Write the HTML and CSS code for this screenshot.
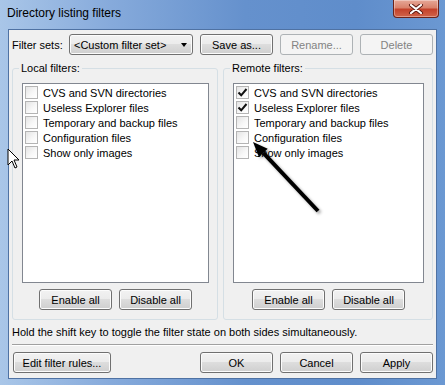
FILE: index.html
```html
<!DOCTYPE html>
<html lang="en">
<head>
    <meta charset="UTF-8">
    <title>Directory listing filters</title>
    <link rel="stylesheet" href="styles.css">
</head>
<body>
    <div class="window">
        <div class="titlebar">
            <span class="title">Directory listing filters</span>
            <div class="close">
                <svg width="16" height="10" viewBox="0 0 16 10">
                    <path d="M3 1 L13 9 M13 1 L3 9" stroke="#5a1a12" stroke-width="4" stroke-linecap="round"/>
                    <path d="M3 1 L13 9 M13 1 L3 9" stroke="#ffffff" stroke-width="2.2" stroke-linecap="round"/>
                </svg>
            </div>
        </div>

        <div class="client">
            <div class="sets-row">
                <span class="sets-label">Filter sets:</span>
                <div class="combo">
                    <span>&lt;Custom filter set&gt;</span>
                    <span class="combo-arrow"></span>
                </div>
                <button class="btn">Save as...</button>
                <button class="btn" disabled>Rename...</button>
                <button class="btn" disabled>Delete</button>
            </div>

            <div class="groups">
                <fieldset class="group group-local">
                    <legend>Local filters:</legend>
                    <div class="filter-list">
                        <div class="filter-item"><span class="check"></span>CVS and SVN directories</div>
                        <div class="filter-item"><span class="check"></span>Useless Explorer files</div>
                        <div class="filter-item"><span class="check"></span>Temporary and backup files</div>
                        <div class="filter-item"><span class="check"></span>Configuration files</div>
                        <div class="filter-item"><span class="check"></span>Show only images</div>
                    </div>
                    <div class="group-buttons">
                        <button class="btn">Enable all</button>
                        <button class="btn">Disable all</button>
                    </div>
                </fieldset>

                <fieldset class="group group-remote">
                    <legend>Remote filters:</legend>
                    <div class="filter-list">
                        <div class="filter-item"><span class="check checked"><svg width="11" height="11" viewBox="0 0 11 11"><path d="M1.5 5.5 L4.2 8.3 L9.5 2" fill="none" stroke="#111" stroke-width="2"/></svg></span>CVS and SVN directories</div>
                        <div class="filter-item"><span class="check checked"><svg width="11" height="11" viewBox="0 0 11 11"><path d="M1.5 5.5 L4.2 8.3 L9.5 2" fill="none" stroke="#111" stroke-width="2"/></svg></span>Useless Explorer files</div>
                        <div class="filter-item"><span class="check"></span>Temporary and backup files</div>
                        <div class="filter-item"><span class="check"></span>Configuration files</div>
                        <div class="filter-item"><span class="check"></span>Show only images</div>
                    </div>
                    <div class="group-buttons">
                        <button class="btn">Enable all</button>
                        <button class="btn">Disable all</button>
                    </div>
                </fieldset>
            </div>

            <p class="hint">Hold the shift key to toggle the filter state on both sides simultaneously.</p>
            <div class="separator"></div>

            <div class="footer">
                <button class="btn btn-edit">Edit filter rules...</button>
                <div class="spacer"></div>
                <button class="btn">OK</button>
                <button class="btn">Cancel</button>
                <button class="btn">Apply</button>
            </div>
        </div>

        <!-- mouse pointer at the left edge -->
        <svg class="pointer" width="14" height="22" viewBox="0 0 14 22">
            <path d="M1 1 L1 17 L5 13 L8 20 L10 19 L7 12 L12 12 Z" fill="#fff" stroke="#000" stroke-width="1" stroke-linejoin="miter"/>
        </svg>

        <!-- annotation arrow -->
        <svg class="annotation" width="90" height="85" viewBox="0 0 90 85">
            <path d="M23.3 17.9 L78 76" stroke="#000" stroke-width="4"/>
            <path d="M13 7 L27.7 13.8 L18.9 22 Z" fill="#000"/>
        </svg>
    </div>
</body>
</html>
```

FILE: styles.css
```css
* {
    margin: 0;
    padding: 0;
    box-sizing: border-box;
}

html, body {
    width: 445px;
    height: 385px;
    overflow: hidden;
}

body {
    font-family: "Liberation Sans", Arial, sans-serif;
    font-size: 11px;
    color: #000;
}

.window {
    position: relative;
    width: 445px;
    height: 385px;
    display: flex;
    flex-direction: column;
    padding: 0 8px 6px 8px;
    background: linear-gradient(to right, #a9c6e8 0%, #86aadb 25%, #6591cd 55%, #5f8dcb 80%, #6b98d2 100%);
}

.titlebar {
    height: 29px;
    display: flex;
    justify-content: space-between;
    align-items: flex-start;
}

.title {
    margin-top: 6px;
    margin-left: -1px;
    font-size: 12px;
    line-height: 15px;
}

.close {
    width: 46px;
    height: 18px;
    margin-right: -2px;
    display: flex;
    align-items: center;
    justify-content: center;
    border: 1px solid #6b231a;
    border-top: none;
    border-radius: 0 0 4px 4px;
    background: linear-gradient(#e6a898 0%, #d9826c 45%, #c4422b 55%, #d0644a 100%);
    box-shadow: inset 0 0 0 1px rgba(255, 255, 255, 0.35);
}

.client {
    flex: 1;
    display: flex;
    flex-direction: column;
    background-color: #f0f0f0;
    border: 1px solid #4f72a3;
    padding: 4px 3px 5px 3px;
}

.sets-row {
    display: flex;
    align-items: center;
    height: 21px;
}

.sets-label {
    width: 57px;
}

.btn {
    width: 73px;
    height: 21px;
    font-family: inherit;
    font-size: 11px;
    color: #000;
    border: 1px solid #707070;
    border-radius: 3px;
    background: linear-gradient(#f2f2f2 0%, #ebebeb 50%, #dddddd 50%, #cfcfcf 100%);
    box-shadow: inset 0 0 0 1px #fcfcfc;
}

.btn:disabled {
    border-color: #adb2b5;
    background: #f4f4f4;
    box-shadow: none;
    color: #838383;
}

.sets-row .btn {
    margin-left: 7px;
}

.combo {
    width: 124px;
    height: 21px;
    display: flex;
    align-items: center;
    justify-content: space-between;
    padding: 0 5px 0 4px;
    border: 1px solid #707070;
    border-radius: 3px;
    background: linear-gradient(#f2f2f2 0%, #ebebeb 50%, #dddddd 50%, #cfcfcf 100%);
    box-shadow: inset 0 0 0 1px #fcfcfc;
}

.combo-arrow {
    width: 0;
    height: 0;
    border-left: 3.5px solid transparent;
    border-right: 3.5px solid transparent;
    border-top: 4px solid #000;
}

.groups {
    display: flex;
    gap: 5px;
    margin-top: 5px;
}

.group {
    min-width: 0;
    height: 260px;
    border: 1px solid #d5dfe5;
    border-radius: 3px;
    padding: 7px 8px 9px 9px;
}

.group-local {
    width: 206px;
}

.group-remote {
    flex: 1;
}

.group legend {
    margin-left: -3px;
    padding: 0 2px;
    line-height: 16px;
}

.filter-list {
    height: 200px;
    background-color: #fff;
    border: 1px solid #828790;
    padding: 1px 2px;
}

.filter-item {
    height: 15px;
    display: flex;
    align-items: center;
    gap: 5px;
    white-space: nowrap;
}

.check {
    width: 13px;
    height: 13px;
    flex: none;
    display: flex;
    align-items: center;
    justify-content: center;
    border: 1px solid #b4b4b4;
    background: linear-gradient(135deg, #e4e4e4 0%, #f8f8f8 60%, #ffffff 100%);
}

.group-buttons {
    display: flex;
    justify-content: center;
    gap: 7px;
    margin-top: 6px;
}

.hint {
    margin-top: 5px;
    line-height: 15px;
}

.separator {
    height: 2px;
    margin-top: 4px;
    border-top: 1px solid #a0a0a0;
    border-bottom: 1px solid #ffffff;
}

.footer {
    display: flex;
    margin-top: 6px;
    gap: 7px;
}

.btn-edit {
    width: 98px;
    margin-left: 1px;
}

.spacer {
    flex: 1;
}

.pointer {
    position: absolute;
    left: 7px;
    top: 148px;
}

.annotation {
    position: absolute;
    left: 240px;
    top: 135px;
    filter: drop-shadow(2px 2px 1.5px rgba(0, 0, 0, 0.35));
}
```
